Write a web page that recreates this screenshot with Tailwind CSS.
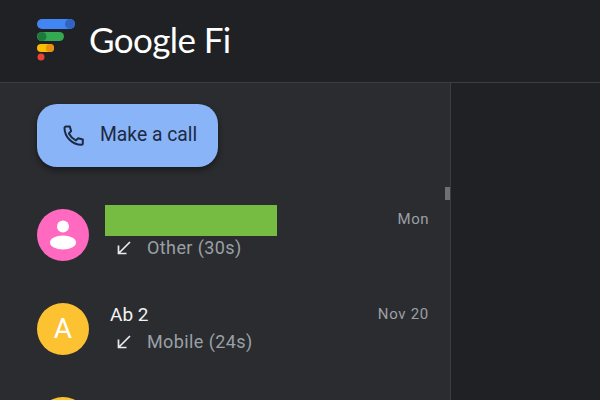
<!DOCTYPE html>
<html lang="en">
<head>
    <meta charset="UTF-8">
    <title>Google Fi</title>
    <script src="https://cdn.jsdelivr.net/npm/@tailwindcss/browser@4"></script>
</head>
<body class="w-[600px] h-[400px] overflow-hidden bg-[#202124] font-['Roboto',sans-serif]">
    <!-- Header -->
    <header class="h-[83px] flex items-center pl-[37px] border-b border-[#3c3d40] bg-[#202124]">
        <svg class="w-[38px] h-[42px] mb-[3px]" viewBox="0 0 38 42">
            <rect x="0" y="0" width="38" height="10" rx="5" fill="#4285f4"/>
            <circle cx="33" cy="5" r="5" fill="#2f64c4"/>
            <rect x="0" y="13" width="27" height="9" rx="4.5" fill="#34a853"/>
            <circle cx="5" cy="17.5" r="4.5" fill="#1e7a3c"/>
            <rect x="0" y="25" width="17" height="8" rx="4" fill="#fbbc04"/>
            <circle cx="13" cy="29" r="4" fill="#ea8f10"/>
            <circle cx="4" cy="38" r="3.5" fill="#ea4335"/>
        </svg>
        <span class="ml-[14px] mb-[3px] text-[35px] leading-none tracking-[-0.6px] text-white font-['Lato',sans-serif]">Google Fi</span>
    </header>

    <div class="flex h-[317px]">
        <!-- Call list -->
        <aside class="relative w-[451px] h-full overflow-hidden bg-[#2b2c30] border-r border-[#3c3d40] pl-[37px] pr-[21px] pt-[21px]">
            <button class="w-[181px] h-[63px] flex items-center pl-[25px] rounded-[20px] bg-[#8ab4f8] shadow-[0_3px_6px_rgba(0,0,0,0.45)]">
                <svg class="w-[24px] h-[24px] text-[#1c2a44]" viewBox="0 0 24 24" fill="none" stroke="currentColor" stroke-width="2" stroke-linejoin="round">
                    <path d="M4 2.500h3.800l1.300 4.600-2.200 2.400c1.500 3 3.900 5.400 6.900 6.900l2.400-2.200 4.600 1.300v3.800c0 .8-.6 1.500-1.500 1.500C10.500 20.800 2.500 12.800 2.500 4c0-.8.7-1.500 1.500-1.500z"/>
                </svg>
                <span class="ml-[14px] text-[19.300px] text-[#1c2a44]">Make a call</span>
            </button>

            <!-- Row: hidden name -->
            <div class="flex items-start mt-[38px] h-[94px]">
                <div class="w-[52px] h-[52px] mt-[4px] rounded-full bg-[#ff69c0] flex items-center justify-center shrink-0">
                    <svg class="w-[28px] h-[32px]" viewBox="0 0 28 32" fill="#fff">
                        <circle cx="14" cy="7.500" r="6"/>
                        <ellipse cx="14" cy="23.500" rx="13" ry="7"/>
                    </svg>
                </div>
                <div class="flex-1 ml-[16px]">
                    <div class="flex justify-between">
                        <div class="w-[172px] h-[31px] bg-[#76bc43]"></div>
                        <span class="mt-[3px] text-[15px] tracking-[0.5px] text-[#9aa0a6]">Mon</span>
                    </div>
                    <div class="flex items-center ml-[11px] -mt-[2px]">
                        <svg class="w-[16px] h-[16px]" viewBox="0 0 16 16" fill="none" stroke="#e8eaed" stroke-width="1.700">
                            <path d="M14 2 3 13M2.500 5.500V13.500H10.500"/>
                        </svg>
                        <span class="ml-[15px] text-[18px] tracking-[0.4px] text-[#9aa0a6]">Other (30s)</span>
                    </div>
                </div>
            </div>

            <!-- Row: Ab 2 -->
            <div class="flex items-start h-[98px]">
                <div class="w-[52px] h-[52px] mt-[4px] rounded-full bg-[#fdc231] flex items-center justify-center shrink-0 text-[28px] text-white">A</div>
                <div class="flex-1 ml-[21px] mt-[4px]">
                    <div class="flex justify-between items-center h-[24px]">
                        <span class="text-[19px] text-[#f1f3f4]">Ab 2</span>
                        <span class="-mt-[1px] text-[15px] tracking-[0.7px] text-[#9aa0a6]">Nov 20</span>
                    </div>
                    <div class="flex items-center ml-[6px] mt-[1px]">
                        <svg class="w-[16px] h-[16px]" viewBox="0 0 16 16" fill="none" stroke="#e8eaed" stroke-width="1.700">
                            <path d="M14 2 3 13M2.500 5.500V13.500H10.500"/>
                        </svg>
                        <span class="ml-[15px] text-[18px] tracking-[0.4px] text-[#9aa0a6]">Mobile (24s)</span>
                    </div>
                </div>
            </div>

            <div class="w-[52px] h-[52px] rounded-full bg-[#fdc231]"></div>

            <!-- Scrollbar thumb -->
            <div class="absolute right-0 top-[104px] w-[5px] h-[13px] bg-[#6f7074]"></div>
        </aside>
        <main class="flex-1 bg-[#202124]"></main>
    </div>
</body>
</html>
